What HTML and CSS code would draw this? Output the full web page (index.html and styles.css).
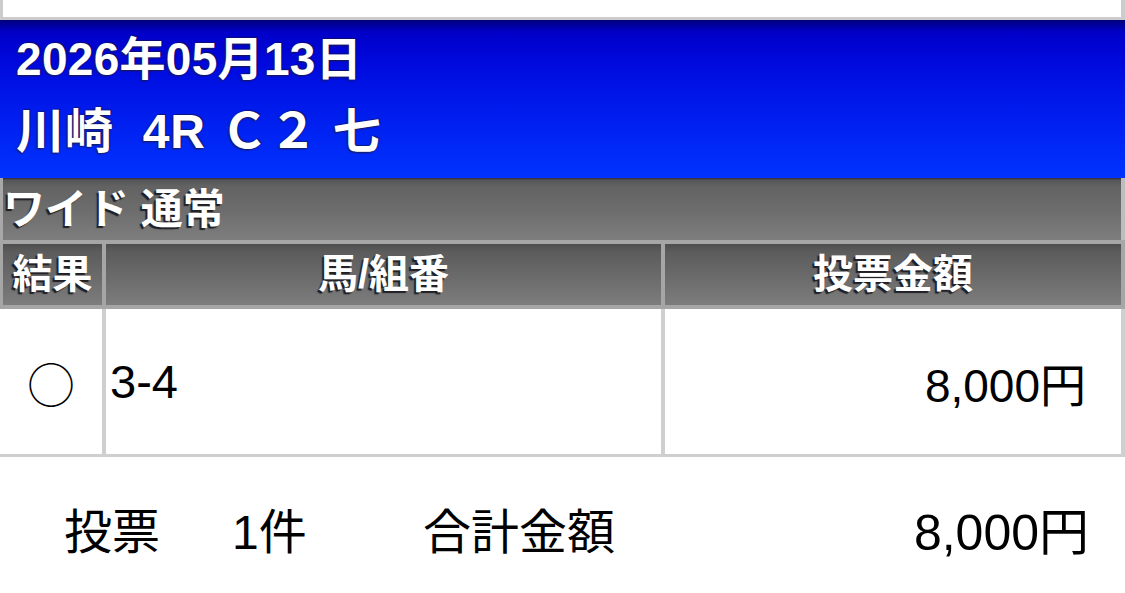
FILE: index.html
```html
<!DOCTYPE html>
<html lang="ja">
<head>
<meta charset="utf-8">
<title>投票内容</title>
<link rel="stylesheet" href="styles.css">
</head>
<body>
<div class="page">
  <div class="topbox"></div>
  <div class="race">
    <div class="race-date">2026年05月13日</div>
    <div class="race-name">川崎  4R Ｃ２ 七</div>
  </div>
  <div class="bettype">ワイド 通常</div>
  <div class="grid head">
    <div class="hcell">結果</div>
    <div class="hcell">馬/組番</div>
    <div class="hcell">投票金額</div>
  </div>
  <div class="grid body">
    <div class="bcell result">○</div>
    <div class="bcell combo">3-4</div>
    <div class="bcell amount">8,000円</div>
  </div>
  <div class="summary">
    <div class="sum-label">投票</div>
    <div class="sum-count">1件</div>
    <div class="sum-label">合計金額</div>
    <div class="sum-amount">8,000円</div>
  </div>
</div>
</body>
</html>
```
FILE: styles.css
```css
html, body {
  margin: 0;
  padding: 0;
  background: #ffffff;
}

.page {
  width: 1125px;
  font-family: "Liberation Sans", "Noto Sans CJK JP", sans-serif;
  color: #000;
}

.topbox {
  height: 17px;
  border-left: 3px solid #cccccc;
  border-right: 4px solid #cccccc;
  border-bottom: 3px solid #cccccc;
  background: #fff;
}

.race {
  height: 158px;
  box-sizing: border-box;
  padding: 11px 0 0 16px;
  background: linear-gradient(to bottom, #00007a 0px, #0000c8 12px, #0008dc 40px, #0018ea 80px, #0030fc 150px, #0033ff 158px);
  color: #ffffff;
  font-weight: bold;
  text-shadow: -1px 1px 2px #1a1a40, 1px -1px 1px rgba(20,20,60,0.6);
}

.race-date {
  font-size: 46px;
  line-height: 56px;
  letter-spacing: 0.3px;
}

.race-name {
  margin-top: 15px;
  font-size: 48px;
  line-height: 60px;
  letter-spacing: 1px;
  white-space: pre;
}

.bettype {
  height: 62px;
  box-sizing: border-box;
  border-left: 3px solid #a8a8a8;
  border-right: 4px solid #bdbdbd;
  background: linear-gradient(to bottom, #2a2a40 0px, #555 2px, #626262 8px, #6e6e6e 35px, #7e7e7e 62px);
  color: #fff;
  font-weight: bold;
  font-size: 42px;
  line-height: 60px;
  padding-top: 2px;
  text-shadow: -2px 2px 1px #1e1e24;
}

.grid {
  display: grid;
  column-gap: 4px;
  padding-right: 4px;
}

.head {
  grid-template-columns: 99px 555px 1fr;
  padding: 4px 4px 4px 3px;
  background: #a6a6a6;
}

.hcell {
  height: 61px;
  line-height: 61px;
  text-align: center;
  color: #fff;
  font-weight: bold;
  font-size: 40px;
  background: linear-gradient(to bottom, #4e4e4e 0px, #5c5c5c 8px, #6c6c6c 35px, #7d7d7d 61px);
  text-shadow: -2px 2px 1px #1e1e24;
}

.body {
  grid-template-columns: 102px 555px 1fr;
  padding-bottom: 3px;
  background: #cfcfcf;
}

.bcell {
  height: 145px;
  background: #fff;
  display: flex;
  align-items: center;
  font-size: 46px;
}

.result {
  justify-content: center;
  font-family: "Noto Sans CJK JP", sans-serif;
  font-size: 48px;
  font-weight: 300;
}

.combo {
  padding-left: 4px;
  font-size: 47px;
}

.amount {
  justify-content: flex-end;
  padding-right: 35px;
}

.summary {
  display: grid;
  grid-template-columns: 168px 191px 1fr auto;
  padding: 46px 36px 0 64px;
  font-size: 48px;
  line-height: 60px;
}

.sum-amount {
  font-size: 50px;
}
```
